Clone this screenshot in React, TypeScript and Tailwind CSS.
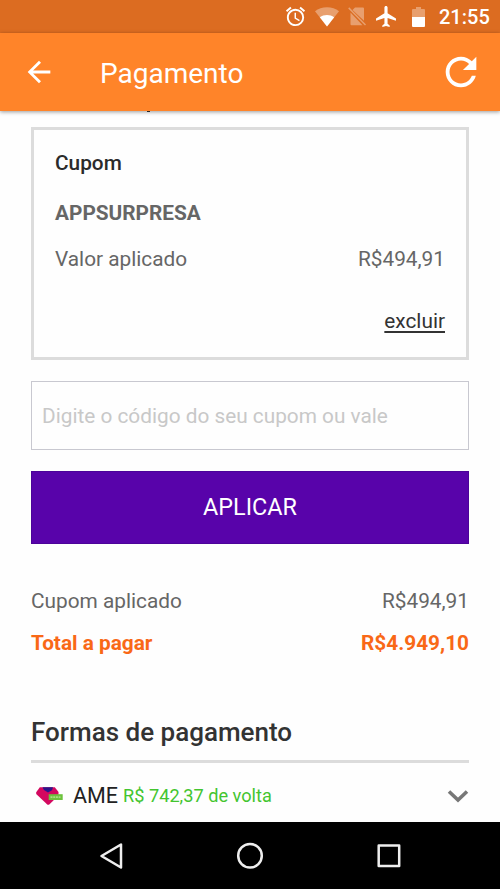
import React from 'react'

interface SummaryRowProps {
  label: string
  value: string
  className?: string
}

const AlarmIcon = () => (
  <svg viewBox="0 0 24 24" className="h-[23px] w-[23px]" fill="currentColor">
    <path d="M22 5.72l-4.6-3.86-1.29 1.53 4.6 3.86L22 5.72zM7.88 3.39L6.6 1.86 2 5.71l1.29 1.53 4.59-3.85zM12.5 8H11v6l4.75 2.85.75-1.23-4-2.37V8zM12 4c-4.97 0-9 4.03-9 9s4.02 9 9 9a9 9 0 0 0 0-18zm0 16c-3.87 0-7-3.13-7-7s3.13-7 7-7 7 3.13 7 7-3.13 7-7 7z" />
  </svg>
)

const WifiIcon = () => (
  <svg viewBox="0 0 24 20" className="h-5 w-6" fill="currentColor">
    <path d="M12 19.5L0 4.2C3.3 1.7 7.4.3 12 .3s8.7 1.4 12 3.9z" opacity="0.35" />
    <path d="M12 19.5L4.8 10.3C7 8.8 9.3 8 12 8s5 .8 7.2 2.3z" />
  </svg>
)

const NoSimIcon = () => (
  <svg viewBox="0 0 18 19" className="h-[19px] w-[18px]" fill="currentColor" opacity="0.35">
    <path d="M7 .5h8q1 0 1 1v12.300L4.500 3zM2.500 5.500L14.500 18.300h-11q-1 0-1-1z" />
    <path d="M1.2.3L18 17.400l-1 1L.2 1.500z" />
  </svg>
)

const AirplaneIcon = () => (
  <svg viewBox="2.5 2 19 20" className="h-[21px] w-5" fill="currentColor">
    <path d="M21.5 16v-2l-8-5V3.500c0-.83-.67-1.500-1.500-1.500s-1.500.67-1.500 1.500V9l-8 5v2l8-2.500V19l-2 1.500V22l3.500-1 3.500 1v-1.500l-2-1.500v-5.500z" />
  </svg>
)

const BatteryIcon = () => (
  <svg viewBox="0 0 13 20" className="h-5 w-[13px]" fill="currentColor">
    <path d="M4 0h5v2h3q1 0 1 1v7H0V3q0-1 1-1h3z" opacity="0.35" />
    <path d="M0 10h13v9q0 1-1 1H1q-1 0-1-1z" />
  </svg>
)

const AmeIcon = () => (
  <svg viewBox="0 0 27 18" className="h-[18px] w-[27px]">
    <path d="M3.8 .3h15L22.500 5v3.500L13 17.800h-1.500L.2 7V5.300z" fill="#d3085f" />
    <path d="M6.500 .3h10.500l-1 3-4 2.200-4-2.500z" fill="#29148a" />
    <rect x="12.700" y="7.200" width="14" height="5.800" fill="#6cc23d" />
    <path d="M14.500 10.100h10" stroke="#a9de80" strokeWidth="1.800" strokeDasharray="2 .7" />
  </svg>
)

const StatusBar = () => (
  <div className="flex h-[33px] shrink-0 items-center bg-[#dc6c21] pl-[284px] text-white">
    <AlarmIcon />
    <div className="ml-2"><WifiIcon /></div>
    <div className="ml-[9px]"><NoSimIcon /></div>
    <div className="ml-[10px]"><AirplaneIcon /></div>
    <div className="ml-4"><BatteryIcon /></div>
    <span className="ml-[14px] mt-px text-[20px] font-medium leading-none">21:55</span>
  </div>
)

const Header = () => (
  <header className="relative z-10 flex h-[78px] shrink-0 items-center bg-[#ff8429] text-white shadow-[0_1px_4px_rgba(0,0,0,0.4)]">
    <button className="ml-[22px]" aria-label="Voltar">
      <svg viewBox="0 0 24 24" className="h-[34px] w-[34px]" fill="currentColor">
        <path d="M20 11H7.830l5.590-5.590L12 4l-8 8 8 8 1.410-1.410L7.830 13H20v-2z" />
      </svg>
    </button>
    <h1 className="ml-11 mt-[3px] text-[28px] leading-8">Pagamento</h1>
    <button className="ml-auto mr-4" aria-label="Atualizar">
      <svg viewBox="0 0 24 24" className="h-[46px] w-[46px]" fill="currentColor">
        <path d="M17.650 6.350C16.200 4.900 14.210 4 12 4c-4.420 0-7.990 3.580-7.990 8s3.570 8 7.990 8c3.730 0 6.840-2.550 7.730-6h-2.080c-.82 2.330-3.040 4-5.650 4-3.310 0-6-2.690-6-6s2.690-6 6-6c1.660 0 3.140.69 4.220 1.780L13 11h7V4l-2.350 2.350z" />
      </svg>
    </button>
  </header>
)

const SummaryRow: React.FC<SummaryRowProps> = ({ label, value, className }) => (
  <div className={`flex justify-between text-[20.8px] leading-6 ${className ?? ''}`}>
    <span>{label}</span>
    <span>{value}</span>
  </div>
)

const CouponCard = () => (
  <section className="mt-4 h-[233px] border-[3px] border-[#dcdcdc] px-[21px] pt-[21px] text-[20.8px] leading-6 text-[#666]">
    <h2 className="font-medium text-[#2b2b2b]">Cupom</h2>
    <p className="mt-[26px] font-bold">APPSURPRESA</p>
    <SummaryRow label="Valor aplicado" value="R$494,91" className="mt-[22px]" />
    <div className="mt-[38px] text-right">
      <a className="text-[#333] underline underline-offset-[3px]">excluir</a>
    </div>
  </section>
)

const NavigationBar = () => (
  <nav className="flex h-[67px] shrink-0 items-center justify-between bg-black px-[98px]">
    <svg viewBox="0 0 26 28" className="h-7 w-[26px]" fill="none" stroke="#eee" strokeWidth="2.5" strokeLinejoin="round">
      <path d="M23 2.500v23L3.500 14z" />
    </svg>
    <svg viewBox="0 0 28 28" className="h-7 w-7" fill="none" stroke="#eee" strokeWidth="2.5">
      <circle cx="14" cy="13.800" r="11.800" />
    </svg>
    <svg viewBox="0 0 26 28" className="h-7 w-[26px]" fill="none" stroke="#eee" strokeWidth="2.5" strokeLinejoin="round">
      <rect x="2.700" y="3.500" width="20.500" height="20.500" />
    </svg>
  </nav>
)

export default function App() {
  return (
    <div className="flex h-[889px] w-[500px] flex-col overflow-hidden bg-[#fefefe] font-['Roboto',sans-serif]">
      <StatusBar />
      <Header />

      <main className="relative min-h-0 flex-1 overflow-hidden px-[31px]">
        {/* Tail of the heading scrolled under the header */}
        <span className="absolute left-[147px] top-0 h-px w-[3px] bg-[#333]" />

        <CouponCard />

        <input
          className="mt-[21px] block h-[69px] w-full border border-[#c8c8d0] px-[10px] text-[20.8px] placeholder:text-[#c8c8c8]"
          placeholder="Digite o código do seu cupom ou vale"
        />
        <button className="mt-[21px] block h-[73px] w-full border border-[#4c0399] bg-[#5803aa] text-[23.4px] text-white">
          APLICAR
        </button>

        <SummaryRow label="Cupom aplicado" value="R$494,91" className="mt-[45px] text-[#666]" />
        <SummaryRow label="Total a pagar" value="R$4.949,10" className="mt-[18px] font-bold text-[#f96816]" />

        <h2 className="mt-[61px] border-b-[3px] border-[#dcdcdc] pb-[12px] text-[26px] font-medium leading-8 text-[#333]">
          Formas de pagamento
        </h2>
        <div className="flex h-[66px] items-center pl-[5px]">
          <AmeIcon />
          <span className="ml-[10px] text-[21.5px] text-[#222]">AME</span>
          <span className="ml-[5px] text-[18.2px] text-[#43c52f]">R$ 742,37 de volta</span>
          <svg viewBox="0 0 22 14" className="ml-auto h-[14px] w-[22px]" fill="none" stroke="#777" strokeWidth="3.6">
            <path d="M2 2.500l9 8.500 9-8.500" />
          </svg>
        </div>
      </main>

      <NavigationBar />
    </div>
  )
}
